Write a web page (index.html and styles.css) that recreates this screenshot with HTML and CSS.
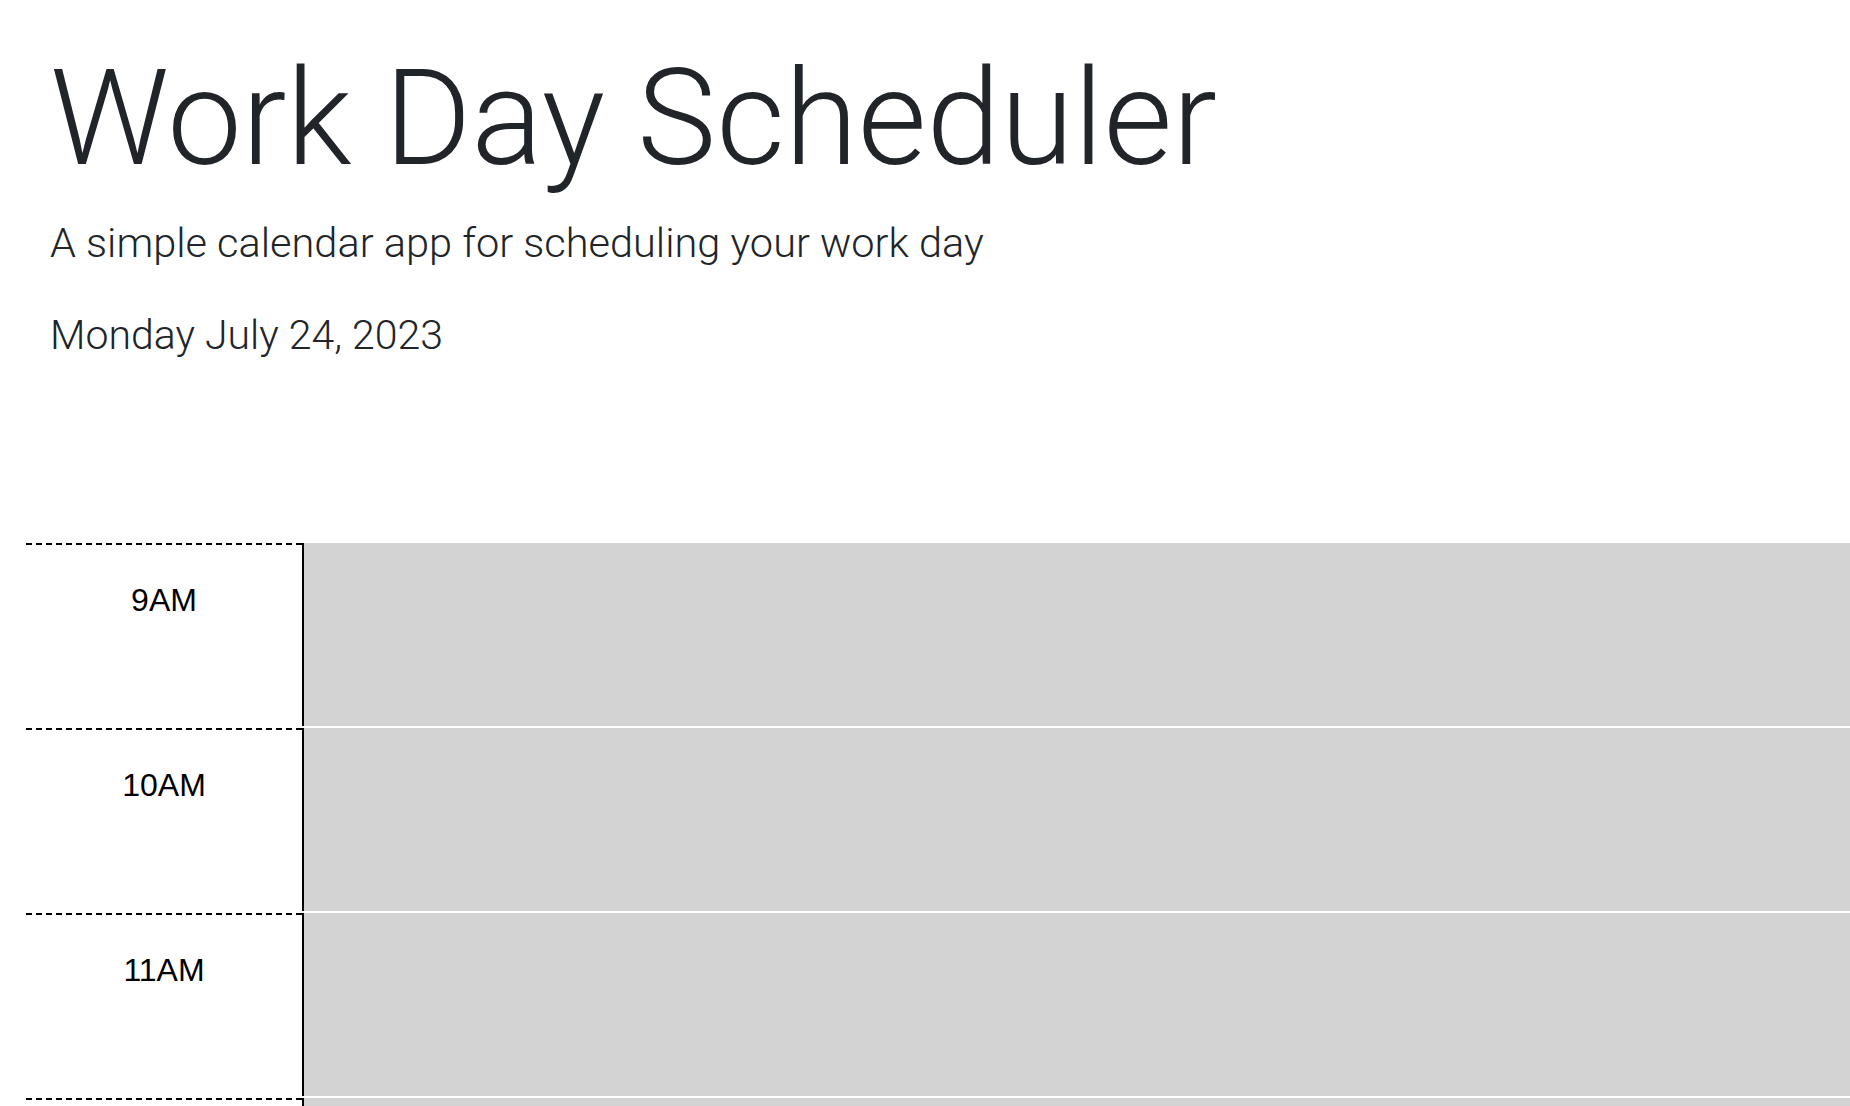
FILE: index.html
```html
<!DOCTYPE html>
<html lang="en">
<head>
<meta charset="utf-8">
<title>Work Day Scheduler</title>
<link rel="stylesheet" href="styles.css">
</head>
<body>
<header class="jumbotron">
  <h1 class="title">Work Day Scheduler</h1>
  <p class="lead">A simple calendar app for scheduling your work day</p>
  <p class="current-day">Monday July 24, 2023</p>
</header>
<main class="schedule">
  <div class="time-block past">
    <div class="hour">9AM</div>
    <textarea class="description"></textarea>
  </div>
  <div class="time-block past">
    <div class="hour">10AM</div>
    <textarea class="description"></textarea>
  </div>
  <div class="time-block past">
    <div class="hour">11AM</div>
    <textarea class="description"></textarea>
  </div>
  <div class="time-block past">
    <div class="hour">12PM</div>
    <textarea class="description"></textarea>
  </div>
</main>
</body>
</html>
```
FILE: styles.css
```css
html, body {
  margin: 0;
  padding: 0;
  overflow: hidden;
  background: #ffffff;
}

body {
  font-family: "Helvetica Neue", Roboto, "Liberation Sans", Arial, sans-serif;
  color: #212529;
}

.jumbotron {
  padding: 39px 0 0 50px;
  height: 543px;
  box-sizing: border-box;
}

.title {
  margin: 0;
  font-size: 133px;
  font-weight: 300;
  line-height: 1.2;
}

.lead {
  margin: 19px 0 0;
  font-size: 41.5px;
  font-weight: 300;
  line-height: 1.2;
}

.current-day {
  margin: 44px 0 0;
  font-size: 41px;
  font-weight: 300;
  line-height: 1.2;
}

.schedule {
  margin-left: 26px;
}

.time-block {
  display: flex;
  align-items: flex-start;
  height: 185px;
}

.hour {
  width: 276px;
  height: 185px;
  box-sizing: border-box;
  border-top: 2px dashed #000000;
  padding-top: 37px;
  text-align: center;
  font-family: "Liberation Sans", Arial, sans-serif;
  font-size: 32px;
  color: #000000;
}

.description {
  flex: 1;
  box-sizing: border-box;
  height: 183px;
  margin: 0;
  padding: 10px;
  border: none;
  border-left: 2px solid #000000;
  resize: none;
  background: #d3d3d3;
  color: #ffffff;
  outline: none;
  font-family: "Liberation Sans", Arial, sans-serif;
  font-size: 28px;
}
```
